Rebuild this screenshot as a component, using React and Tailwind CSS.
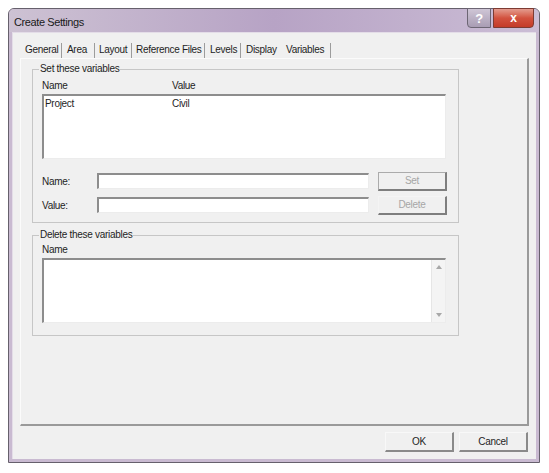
export default function App() {
  const tabs = [
    { label: "General", cls: "w-[40px] pl-[3px] border-r border-[#9c9c9c]" },
    { label: "Area", cls: "w-[33px] pl-[5px] border-r border-[#9c9c9c]" },
    { label: "Layout", cls: "w-[37px] pl-[4px] border-r border-[#9c9c9c]" },
    { label: "Reference Files", cls: "w-[73px] pl-[4px] border-r border-[#9c9c9c]" },
    { label: "Levels", cls: "w-[36px] pl-[5px] border-r border-[#9c9c9c]" },
    { label: "Display", cls: "w-[40px] pl-[5px]" },
    { label: "Variables", cls: "w-[50px] pl-[5px] border-r border-[#9c9c9c] -mt-[3px]" },
  ]

  const sunken = "bg-white border-t-[2px] border-l-[2px] border-r border-b border-t-[#8d8d8d] border-l-[#8d8d8d] border-r-[#ececec] border-b-[#ececec]"

  return (
    <div className="w-[549px] h-[473px] bg-white pt-[8px] pl-[8px] font-['Liberation_Sans',Arial,sans-serif] text-[10px] tracking-[-0.3px] text-[#1e1e1e]">
      <div className="w-[532px] h-[455px] rounded-t-[6px] border border-[#66606c] bg-[#c9bad1] flex flex-col px-[3px] pb-[3px]">
        {/* title bar */}
        <div className="h-[23px] flex justify-between items-start -mx-[3px] pl-[5px] pr-[5px] rounded-t-[5px] bg-linear-to-r from-[#cdc2d3] via-[#b7a3c5] to-[#cbbdd5]">
          <span className="mt-[6px] text-[11px] leading-[14px] tracking-[-0.4px] text-[#1a1a1a]">Create Settings</span>
          <div className="flex -mt-[1px] gap-[2px]">
            <div className="w-[24px] h-[20px] rounded-bl-[4px] border border-[#6d6674] bg-linear-to-b from-[#cfc6d6] to-[#a99db4] flex items-center justify-center text-white text-[13px] font-bold leading-none">?</div>
            <div className="w-[41px] h-[20px] rounded-br-[4px] border border-[#7d3b33] bg-linear-to-b from-[#e39b8e] via-[#d2523f] to-[#c43b28] flex items-center justify-center text-white text-[12px] font-bold leading-none">x</div>
          </div>
        </div>

        {/* content */}
        <div className="flex-1 bg-[#f0f0f0] border-l border-t border-[#e4dde8] flex flex-col">
          {/* tabs */}
          <div className="mt-[8px] pl-[9px] h-[17px] flex items-end">
            {tabs.map((t) => (
              <div key={t.label} className={`h-[15px] leading-[14px] ${t.cls}`}>
                {t.label}
              </div>
            ))}
          </div>

          {/* tab panel */}
          <div className="mx-[7px] h-[368px] border-t border-l border-[#fbfbfb] border-r-[2px] border-b-[2px] border-r-[#9a9a9a] border-b-[#9a9a9a] pl-[11px] pt-[10px]">
            {/* Set these variables */}
            <div className="relative w-[427px] border border-[#c6c6c6] pt-[10px] pl-[9px] pr-[11px] pb-[7px]">
              <span className="absolute -top-[7px] left-[6px] px-[1px] bg-[#f0f0f0] leading-[12px]">Set these variables</span>
              <div className="flex h-[12px] leading-[12px]">
                <span className="w-[130px]">Name</span>
                <span>Value</span>
              </div>
              <div className={`mt-[2px] h-[65px] w-[404px] pl-[1px] pt-[2px] ${sunken}`}>
                <div className="flex leading-[12px]">
                  <span className="w-[127px]">Project</span>
                  <span>Civil</span>
                </div>
              </div>
              <div className="mt-[12px] h-[20px] flex items-center">
                <span className="w-[55px]">Name:</span>
                <div className={`w-[272px] h-[16px] ${sunken}`} />
                <div className="ml-[9px] w-[69px] h-[19px] border border-[#ababab] border-r-[2px] border-b-[2px] border-r-[#7e7e7e] border-b-[#7e7e7e] flex items-center justify-center text-[#a6a6a6]">Set</div>
              </div>
              <div className="mt-[4px] h-[20px] flex items-center">
                <span className="w-[55px]">Value:</span>
                <div className={`w-[272px] h-[16px] ${sunken}`} />
                <div className="ml-[9px] w-[69px] h-[19px] border border-[#f4f4f4] border-r-[2px] border-b-[2px] border-r-[#7e7e7e] border-b-[#7e7e7e] flex items-center justify-center text-[#a6a6a6]">Delete</div>
              </div>
            </div>

            {/* Delete these variables */}
            <div className="relative mt-[12px] w-[427px] border border-[#c6c6c6] pt-[8px] pl-[9px] pr-[11px] pb-[12px]">
              <span className="absolute -top-[7px] left-[6px] px-[1px] bg-[#f0f0f0] leading-[12px]">Delete these variables</span>
              <div className="h-[12px] leading-[12px]">Name</div>
              <div className={`mt-[2px] h-[65px] w-[404px] flex ${sunken}`}>
                <div className="flex-1" />
                <div className="w-[14px] bg-[#f4f4f4] border-l border-[#e6e6e6] flex flex-col items-center justify-between py-[5px]">
                  <svg width="6" height="4" viewBox="0 0 6 4"><path d="M3 0L6 4H0Z" fill="#a8a8a8" /></svg>
                  <svg width="6" height="4" viewBox="0 0 6 4"><path d="M0 0H6L3 4Z" fill="#a8a8a8" /></svg>
                </div>
              </div>
            </div>
          </div>

          {/* buttons */}
          <div className="mt-[6px] pr-[8px] flex justify-end gap-[5px]">
            <div className="w-[69px] h-[20px] border border-[#f8f8f8] border-r-[2px] border-b-[2px] border-r-[#8a8a8a] border-b-[#8a8a8a] flex items-center justify-center">OK</div>
            <div className="w-[69px] h-[20px] border border-[#f8f8f8] border-r-[2px] border-b-[2px] border-r-[#8a8a8a] border-b-[#8a8a8a] flex items-center justify-center">Cancel</div>
          </div>
        </div>
      </div>
    </div>
  )
}
